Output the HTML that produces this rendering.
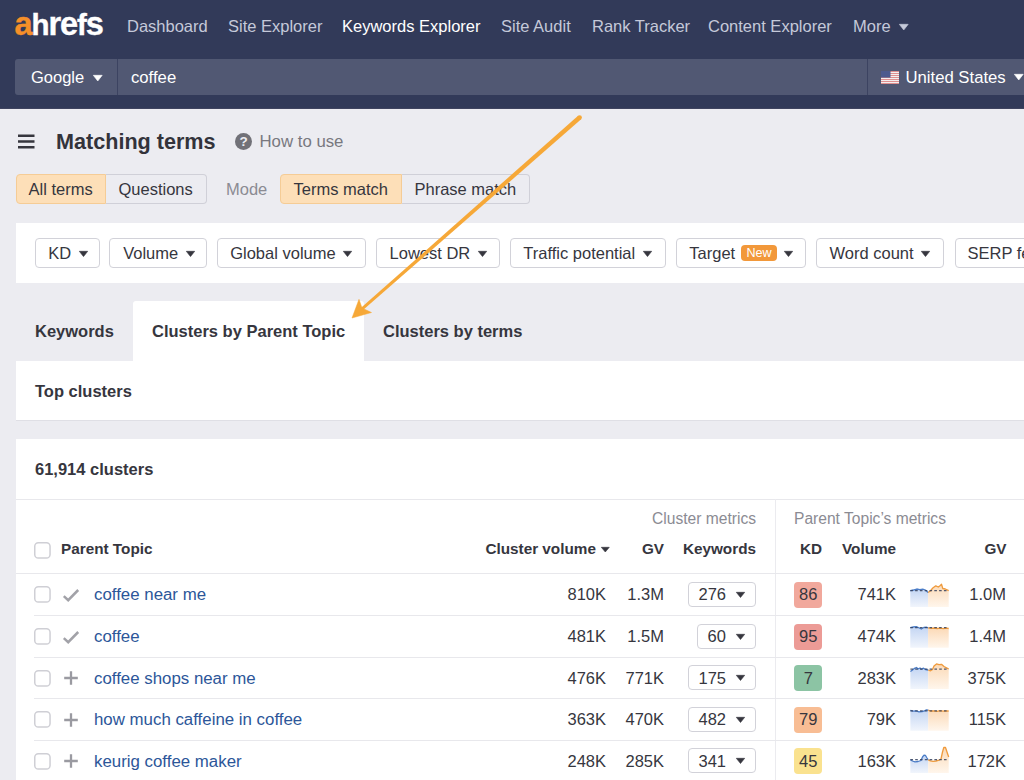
<!DOCTYPE html>
<html><head><meta charset="utf-8">
<style>
*{box-sizing:border-box;margin:0;padding:0}
html,body{width:1024px;height:780px;overflow:hidden;background:#ececf1;font-family:"Liberation Sans",Arial,sans-serif;color:#36363e}
.abs{position:absolute}
#hdr{position:absolute;left:0;top:0;width:1024px;height:108px;background:#323a59}
#hdr2{position:absolute;left:0;top:108px;width:1024px;height:1px;background:#3f4460}
#sb{position:absolute;left:15px;top:59px;width:1020px;height:36px;background:#515873;border-radius:3px}
.car{display:inline-block;position:relative;width:0;height:0;border-style:solid;border-color:transparent;border-top-color:currentColor;border-bottom-width:0;vertical-align:middle}
.t{position:absolute;white-space:nowrap}
.box{position:absolute;border:1px solid #d2d2d9;border-radius:4px;background:#fff}
.tg{position:absolute;top:174px;height:30px;border:1px solid #d0d0d8}
.tg.on{background:#fddfb8;border-color:#f5cc96}
.pan{position:absolute;left:15.5px;width:1010px;background:#fff}
.hl{position:absolute;height:1px;background:#e8e8ec}
.cb{position:absolute;width:16px;height:16px;border:1px solid #cacad1;border-radius:4px;background:#fff}
.kd{position:absolute;width:28px;height:26px;border-radius:4px}
</style></head><body>
<div id="hdr"></div><div id="hdr2"></div>
<div class="t" style="left:14.5px;top:6.1px;font-size:29.5px;line-height:36px;color:#fff;font-weight:bold;letter-spacing:-1.1px;-webkit-text-stroke:0.4px;"><span style="color:#f58f29;font-size:32.5px">a</span>h<span style="font-size:32.5px">re</span>f<span style="font-size:32.5px">s</span></div>
<div class="t" style="left:127px;top:16.0px;font-size:16.5px;line-height:20px;color:#c5c9d9;">Dashboard</div>
<div class="t" style="left:228px;top:16.0px;font-size:16.5px;line-height:20px;color:#c5c9d9;">Site Explorer</div>
<div class="t" style="left:342px;top:16.0px;font-size:16.5px;line-height:20px;color:#fff;">Keywords Explorer</div>
<div class="t" style="left:501px;top:16.0px;font-size:16.5px;line-height:20px;color:#c5c9d9;">Site Audit</div>
<div class="t" style="left:592px;top:16.0px;font-size:16.5px;line-height:20px;color:#c5c9d9;">Rank Tracker</div>
<div class="t" style="left:708px;top:16.0px;font-size:16.5px;line-height:20px;color:#c5c9d9;">Content Explorer</div>
<div class="t" style="left:853px;top:16.0px;font-size:16.5px;line-height:20px;color:#c5c9d9;">More<svg style="display:inline-block;position:relative;vertical-align:middle;margin-left:8px;top:-1px;overflow:visible" width="9.5" height="6" viewBox="0 0 9.5 6"><path d="M0.3 0.3 H9.2 L4.75 6 Z" fill="currentColor" stroke="currentColor" stroke-width="0.6" stroke-linejoin="round"/></svg></div>
<div id="sb"></div>
<div class="abs" style="left:117px;top:59px;width:1px;height:36px;background:#3c4361"></div>
<div class="abs" style="left:867px;top:59px;width:1px;height:36px;background:#3c4361"></div>
<div class="t" style="left:31px;top:67.0px;font-size:16.5px;line-height:20px;color:#fff;">Google<svg style="display:inline-block;position:relative;vertical-align:middle;margin-left:8.5px;top:-1px;overflow:visible" width="9.5" height="6" viewBox="0 0 9.5 6"><path d="M0.3 0.3 H9.2 L4.75 6 Z" fill="currentColor" stroke="currentColor" stroke-width="0.6" stroke-linejoin="round"/></svg></div>
<div class="t" style="left:131px;top:67.5px;font-size:16.7px;line-height:20px;color:#fff;">coffee</div>
<div class="t" style="left:905.5px;top:67.5px;font-size:16.7px;line-height:20px;color:#fff;">United States<svg style="display:inline-block;position:relative;vertical-align:middle;margin-left:8px;top:-1px;overflow:visible" width="9.5" height="6" viewBox="0 0 9.5 6"><path d="M0.3 0.3 H9.2 L4.75 6 Z" fill="currentColor" stroke="currentColor" stroke-width="0.6" stroke-linejoin="round"/></svg></div>
<svg class="abs" style="left:881px;top:71px" width="18" height="13" viewBox="0 0 18 13"><rect width="18" height="13" fill="#f4eeee"/><rect y="0" width="18" height="1" fill="#df8f8f"/><rect y="2" width="18" height="1" fill="#df8f8f"/><rect y="4" width="18" height="1" fill="#df8f8f"/><rect y="6" width="18" height="1" fill="#df8f8f"/><rect y="8" width="18" height="1" fill="#df8f8f"/><rect y="10" width="18" height="1" fill="#df8f8f"/><rect y="12" width="18" height="1" fill="#df8f8f"/><rect width="9.5" height="6.6" fill="#4c5a8e"/></svg>
<svg class="abs" style="left:18px;top:134px" width="17" height="16" viewBox="0 0 17 16"><path d="M0 1.8h16.5M0 7.5h16.5M0 13.2h16.5" stroke="#36363e" stroke-width="2.4" fill="none"/></svg>
<div class="t" style="left:56px;top:128.5px;font-size:21.6px;line-height:26px;color:#33333b;font-weight:bold;">Matching terms</div>
<div class="abs" style="left:235px;top:133px;width:17px;height:17px;border-radius:9px;background:#717178"></div>
<div class="t" style="left:239.4px;top:131.5px;font-size:13.5px;line-height:20px;color:#ededf2;font-weight:bold;">?</div>
<div class="t" style="left:259.5px;top:131.5px;font-size:16.8px;line-height:20px;color:#78787f;">How to use</div>
<div class="tg on" style="left:16px;width:90px;border-radius:4px 0 0 4px"></div>
<div class="tg" style="left:106px;width:101px;border-radius:0 4px 4px 0;border-left:none"></div>
<div class="tg on" style="left:280px;width:122px;border-radius:4px 0 0 4px"></div>
<div class="tg" style="left:402px;width:128px;border-radius:0 4px 4px 0;border-left:none"></div>
<div class="t" style="left:28.5px;top:179.0px;font-size:16.5px;line-height:20px;color:#36363e;">All terms</div>
<div class="t" style="left:118.5px;top:179.0px;font-size:16.5px;line-height:20px;color:#36363e;">Questions</div>
<div class="t" style="left:226px;top:179.0px;font-size:16.5px;line-height:20px;color:#8b8b93;">Mode</div>
<div class="t" style="left:293.5px;top:179.0px;font-size:16.5px;line-height:20px;color:#36363e;">Terms match</div>
<div class="t" style="left:414.5px;top:179.0px;font-size:16.5px;line-height:20px;color:#36363e;">Phrase match</div>
<div class="pan" style="top:223px;height:60px"></div>
<div class="box" style="left:35px;top:238px;width:65px;height:30px"></div>
<div class="t" style="left:48.3px;top:243.0px;font-size:16.5px;line-height:20px;color:#36363e;">KD<svg style="display:inline-block;position:relative;vertical-align:middle;margin-left:7.6px;top:-0.4px;overflow:visible" width="9" height="5.6" viewBox="0 0 9 5.6"><path d="M0.3 0.3 H8.7 L4.5 5.6 Z" fill="currentColor" stroke="currentColor" stroke-width="0.6" stroke-linejoin="round"/></svg></div>
<div class="box" style="left:109px;top:238px;width:98px;height:30px"></div>
<div class="t" style="left:123.2px;top:243.0px;font-size:16.5px;line-height:20px;color:#36363e;">Volume<svg style="display:inline-block;position:relative;vertical-align:middle;margin-left:7.6px;top:-0.4px;overflow:visible" width="9" height="5.6" viewBox="0 0 9 5.6"><path d="M0.3 0.3 H8.7 L4.5 5.6 Z" fill="currentColor" stroke="currentColor" stroke-width="0.6" stroke-linejoin="round"/></svg></div>
<div class="box" style="left:217px;top:238px;width:149px;height:30px"></div>
<div class="t" style="left:230.2px;top:243.0px;font-size:16.5px;line-height:20px;color:#36363e;">Global volume<svg style="display:inline-block;position:relative;vertical-align:middle;margin-left:7.6px;top:-0.4px;overflow:visible" width="9" height="5.6" viewBox="0 0 9 5.6"><path d="M0.3 0.3 H8.7 L4.5 5.6 Z" fill="currentColor" stroke="currentColor" stroke-width="0.6" stroke-linejoin="round"/></svg></div>
<div class="box" style="left:376px;top:238px;width:124px;height:30px"></div>
<div class="t" style="left:389.6px;top:243.0px;font-size:16.5px;line-height:20px;color:#36363e;">Lowest DR<svg style="display:inline-block;position:relative;vertical-align:middle;margin-left:7.6px;top:-0.4px;overflow:visible" width="9" height="5.6" viewBox="0 0 9 5.6"><path d="M0.3 0.3 H8.7 L4.5 5.6 Z" fill="currentColor" stroke="currentColor" stroke-width="0.6" stroke-linejoin="round"/></svg></div>
<div class="box" style="left:510px;top:238px;width:156px;height:30px"></div>
<div class="t" style="left:523.3px;top:243.0px;font-size:16.5px;line-height:20px;color:#36363e;">Traffic potential<svg style="display:inline-block;position:relative;vertical-align:middle;margin-left:7.6px;top:-0.4px;overflow:visible" width="9" height="5.6" viewBox="0 0 9 5.6"><path d="M0.3 0.3 H8.7 L4.5 5.6 Z" fill="currentColor" stroke="currentColor" stroke-width="0.6" stroke-linejoin="round"/></svg></div>
<div class="box" style="left:676px;top:238px;width:130px;height:30px"></div>
<div class="t" style="left:689.3px;top:243.0px;font-size:16.5px;line-height:20px;color:#36363e;">Target</div>
<div class="abs" style="left:741px;top:244.5px;width:36px;height:16.5px;border-radius:4px;background:#f2983a"></div>
<div class="t" style="left:746.5px;top:243.0px;font-size:12.6px;line-height:20px;color:#fff;">New</div>
<div class="t" style="left:784.4px;top:250.5px;line-height:0"><svg style="display:inline-block;position:relative;vertical-align:middle;margin-left:0px;top:0px;overflow:visible" width="9" height="5.6" viewBox="0 0 9 5.6"><path d="M0.3 0.3 H8.7 L4.5 5.6 Z" fill="currentColor" stroke="currentColor" stroke-width="0.6" stroke-linejoin="round"/></svg></div>
<div class="box" style="left:816px;top:238px;width:128px;height:30px"></div>
<div class="t" style="left:829.5px;top:243.0px;font-size:16.5px;line-height:20px;color:#36363e;">Word count<svg style="display:inline-block;position:relative;vertical-align:middle;margin-left:7.6px;top:-0.4px;overflow:visible" width="9" height="5.6" viewBox="0 0 9 5.6"><path d="M0.3 0.3 H8.7 L4.5 5.6 Z" fill="currentColor" stroke="currentColor" stroke-width="0.6" stroke-linejoin="round"/></svg></div>
<div class="box" style="left:955px;top:238px;width:120px;height:30px"></div>
<div class="t" style="left:967.5px;top:243.0px;font-size:16.5px;line-height:20px;color:#36363e;">SERP features</div>
<div class="abs" style="left:133px;top:301.2px;width:231.2px;height:60px;background:#fff;border-radius:3px 3px 0 0"></div>
<div class="t" style="left:35px;top:321.0px;font-size:16.5px;line-height:20px;color:#36363e;font-weight:bold;">Keywords</div>
<div class="t" style="left:152px;top:321.0px;font-size:16.5px;line-height:20px;color:#36363e;font-weight:bold;">Clusters by Parent Topic</div>
<div class="t" style="left:383px;top:321.0px;font-size:16.5px;line-height:20px;color:#36363e;font-weight:bold;">Clusters by terms</div>
<div class="pan" style="top:360.5px;height:60px;border-bottom:1px solid #dfdfe5"></div>
<div class="t" style="left:35px;top:381.0px;font-size:16.5px;line-height:20px;color:#36363e;font-weight:bold;">Top clusters</div>
<div class="pan" style="top:439px;height:360px"></div>
<div class="t" style="left:35px;top:459.0px;font-size:16.5px;line-height:20px;color:#36363e;font-weight:bold;">61,914 clusters</div>
<div class="hl" style="left:15.5px;top:499px;width:1010px"></div>
<div class="abs" style="left:775px;top:499px;width:1px;height:300px;background:#ebebef"></div>
<div class="t" style="right:268px;top:508.5px;font-size:15.6px;line-height:20px;color:#8b8b93;">Cluster metrics</div>
<div class="t" style="left:794px;top:508.5px;font-size:15.6px;line-height:20px;color:#8b8b93;">Parent Topic&rsquo;s metrics</div>
<svg class="abs" style="left:34.3px;top:541.7px" width="17" height="17" viewBox="0 0 17 17"><rect x="0.75" y="0.75" width="15.3" height="15.3" rx="3.6" fill="#fff" stroke="#cfcfd5" stroke-width="1.5"/></svg>
<div class="t" style="left:61px;top:538.5px;font-size:15.3px;line-height:20px;color:#36363e;font-weight:bold;">Parent Topic</div>
<div class="t" style="right:414.5px;top:538.5px;font-size:15.3px;line-height:20px;color:#36363e;font-weight:bold;">Cluster volume<svg style="display:inline-block;position:relative;vertical-align:middle;margin-left:5px;top:0px;overflow:visible" width="8.6" height="5" viewBox="0 0 8.6 5"><path d="M0.3 0.3 H8.299999999999999 L4.3 5 Z" fill="currentColor" stroke="currentColor" stroke-width="0.6" stroke-linejoin="round"/></svg></div>
<div class="t" style="right:360px;top:538.5px;font-size:15.3px;line-height:20px;color:#36363e;font-weight:bold;">GV</div>
<div class="t" style="right:268px;top:538.5px;font-size:15.3px;line-height:20px;color:#36363e;font-weight:bold;">Keywords</div>
<div class="t" style="left:800px;top:538.5px;font-size:15.3px;line-height:20px;color:#36363e;font-weight:bold;">KD</div>
<div class="t" style="left:842px;top:538.5px;font-size:15.3px;line-height:20px;color:#36363e;font-weight:bold;">Volume</div>
<div class="t" style="right:17.5px;top:538.5px;font-size:15.3px;line-height:20px;color:#36363e;font-weight:bold;">GV</div>
<div class="hl" style="left:15.5px;top:573px;width:1010px"></div>
<svg class="abs" style="left:34.3px;top:586px" width="17" height="17" viewBox="0 0 17 17"><rect x="0.75" y="0.75" width="15.3" height="15.3" rx="3.6" fill="#fff" stroke="#cfcfd5" stroke-width="1.5"/></svg>
<svg class="abs" style="left:62px;top:587px" width="18" height="16" viewBox="0 0 18 16"><path d="M1.8 9.2 L6.2 13.2 L16.2 3" stroke="#a2a2a8" stroke-width="2.5" fill="none"/></svg>
<div class="t" style="left:94px;top:584.5px;font-size:16.85px;line-height:20px;color:#2c5699;">coffee near me</div>
<div class="t" style="right:418px;top:584.0px;font-size:16.5px;line-height:20px;color:#36363e;">810K</div>
<div class="t" style="right:360px;top:584.0px;font-size:16.5px;line-height:20px;color:#36363e;">1.3M</div>
<div class="box" style="left:688px;top:582px;width:68px;height:25px"></div>
<div class="t" style="left:698.5px;top:584.0px;font-size:16.5px;line-height:20px;color:#36363e;">276</div>
<div class="t" style="left:736.2px;top:592.2px;line-height:0"><svg style="display:inline-block;position:relative;vertical-align:middle;margin-left:0px;top:0px;overflow:visible" width="9" height="5.5" viewBox="0 0 9 5.5"><path d="M0.3 0.3 H8.7 L4.5 5.5 Z" fill="currentColor" stroke="currentColor" stroke-width="0.6" stroke-linejoin="round"/></svg></div>
<div class="kd" style="left:794.3px;top:582px;background:#f1a89c"></div>
<div class="t" style="left:794.3px;top:584.0px;font-size:16.5px;line-height:20px;color:#36363e;width:28px;text-align:center;">86</div>
<div class="t" style="right:128px;top:584.0px;font-size:16.5px;line-height:20px;color:#36363e;">741K</div>
<div class="t" style="right:18px;top:584.0px;font-size:16.5px;line-height:20px;color:#36363e;">1.0M</div>
<div class="hl" style="left:34px;top:615px;width:991px"></div>
<svg class="abs" style="left:34.3px;top:628px" width="17" height="17" viewBox="0 0 17 17"><rect x="0.75" y="0.75" width="15.3" height="15.3" rx="3.6" fill="#fff" stroke="#cfcfd5" stroke-width="1.5"/></svg>
<svg class="abs" style="left:62px;top:628.5px" width="18" height="16" viewBox="0 0 18 16"><path d="M1.8 9.2 L6.2 13.2 L16.2 3" stroke="#a2a2a8" stroke-width="2.5" fill="none"/></svg>
<div class="t" style="left:94px;top:626.5px;font-size:16.85px;line-height:20px;color:#2c5699;">coffee</div>
<div class="t" style="right:418px;top:626.0px;font-size:16.5px;line-height:20px;color:#36363e;">481K</div>
<div class="t" style="right:360px;top:626.0px;font-size:16.5px;line-height:20px;color:#36363e;">1.5M</div>
<div class="box" style="left:697px;top:624px;width:59px;height:25px"></div>
<div class="t" style="left:707.5px;top:626.0px;font-size:16.5px;line-height:20px;color:#36363e;">60</div>
<div class="t" style="left:736.2px;top:633.7px;line-height:0"><svg style="display:inline-block;position:relative;vertical-align:middle;margin-left:0px;top:0px;overflow:visible" width="9" height="5.5" viewBox="0 0 9 5.5"><path d="M0.3 0.3 H8.7 L4.5 5.5 Z" fill="currentColor" stroke="currentColor" stroke-width="0.6" stroke-linejoin="round"/></svg></div>
<div class="kd" style="left:794.3px;top:623.5px;background:#ec9b96"></div>
<div class="t" style="left:794.3px;top:626.0px;font-size:16.5px;line-height:20px;color:#36363e;width:28px;text-align:center;">95</div>
<div class="t" style="right:128px;top:626.0px;font-size:16.5px;line-height:20px;color:#36363e;">474K</div>
<div class="t" style="right:18px;top:626.0px;font-size:16.5px;line-height:20px;color:#36363e;">1.4M</div>
<div class="hl" style="left:34px;top:657px;width:991px"></div>
<svg class="abs" style="left:34.3px;top:669.6px" width="17" height="17" viewBox="0 0 17 17"><rect x="0.75" y="0.75" width="15.3" height="15.3" rx="3.6" fill="#fff" stroke="#cfcfd5" stroke-width="1.5"/></svg>
<svg class="abs" style="left:63px;top:670px" width="16" height="16" viewBox="0 0 16 16"><path d="M8 1.2v13.6M1.2 8h13.6" stroke="#9a9aa1" stroke-width="2.3" fill="none"/></svg>
<div class="t" style="left:94px;top:668.5px;font-size:16.85px;line-height:20px;color:#2c5699;">coffee shops near me</div>
<div class="t" style="right:418px;top:668.0px;font-size:16.5px;line-height:20px;color:#36363e;">476K</div>
<div class="t" style="right:360px;top:668.0px;font-size:16.5px;line-height:20px;color:#36363e;">771K</div>
<div class="box" style="left:688px;top:665px;width:68px;height:25px"></div>
<div class="t" style="left:698.5px;top:668.0px;font-size:16.5px;line-height:20px;color:#36363e;">175</div>
<div class="t" style="left:736.2px;top:675.2px;line-height:0"><svg style="display:inline-block;position:relative;vertical-align:middle;margin-left:0px;top:0px;overflow:visible" width="9" height="5.5" viewBox="0 0 9 5.5"><path d="M0.3 0.3 H8.7 L4.5 5.5 Z" fill="currentColor" stroke="currentColor" stroke-width="0.6" stroke-linejoin="round"/></svg></div>
<div class="kd" style="left:794.3px;top:665px;background:#8cc4a4"></div>
<div class="t" style="left:794.3px;top:668.0px;font-size:16.5px;line-height:20px;color:#36363e;width:28px;text-align:center;">7</div>
<div class="t" style="right:128px;top:668.0px;font-size:16.5px;line-height:20px;color:#36363e;">283K</div>
<div class="t" style="right:18px;top:668.0px;font-size:16.5px;line-height:20px;color:#36363e;">375K</div>
<div class="hl" style="left:34px;top:698px;width:991px"></div>
<svg class="abs" style="left:34.3px;top:711px" width="17" height="17" viewBox="0 0 17 17"><rect x="0.75" y="0.75" width="15.3" height="15.3" rx="3.6" fill="#fff" stroke="#cfcfd5" stroke-width="1.5"/></svg>
<svg class="abs" style="left:63px;top:711.5px" width="16" height="16" viewBox="0 0 16 16"><path d="M8 1.2v13.6M1.2 8h13.6" stroke="#9a9aa1" stroke-width="2.3" fill="none"/></svg>
<div class="t" style="left:94px;top:709.5px;font-size:16.85px;line-height:20px;color:#2c5699;">how much caffeine in coffee</div>
<div class="t" style="right:418px;top:709.0px;font-size:16.5px;line-height:20px;color:#36363e;">363K</div>
<div class="t" style="right:360px;top:709.0px;font-size:16.5px;line-height:20px;color:#36363e;">470K</div>
<div class="box" style="left:688px;top:707px;width:68px;height:25px"></div>
<div class="t" style="left:698.5px;top:709.0px;font-size:16.5px;line-height:20px;color:#36363e;">482</div>
<div class="t" style="left:736.2px;top:716.7px;line-height:0"><svg style="display:inline-block;position:relative;vertical-align:middle;margin-left:0px;top:0px;overflow:visible" width="9" height="5.5" viewBox="0 0 9 5.5"><path d="M0.3 0.3 H8.7 L4.5 5.5 Z" fill="currentColor" stroke="currentColor" stroke-width="0.6" stroke-linejoin="round"/></svg></div>
<div class="kd" style="left:794.3px;top:706.5px;background:#f8bd94"></div>
<div class="t" style="left:794.3px;top:709.0px;font-size:16.5px;line-height:20px;color:#36363e;width:28px;text-align:center;">79</div>
<div class="t" style="right:128px;top:709.0px;font-size:16.5px;line-height:20px;color:#36363e;">79K</div>
<div class="t" style="right:18px;top:709.0px;font-size:16.5px;line-height:20px;color:#36363e;">115K</div>
<div class="hl" style="left:34px;top:740px;width:991px"></div>
<svg class="abs" style="left:34.3px;top:752.6px" width="17" height="17" viewBox="0 0 17 17"><rect x="0.75" y="0.75" width="15.3" height="15.3" rx="3.6" fill="#fff" stroke="#cfcfd5" stroke-width="1.5"/></svg>
<svg class="abs" style="left:63px;top:753px" width="16" height="16" viewBox="0 0 16 16"><path d="M8 1.2v13.6M1.2 8h13.6" stroke="#9a9aa1" stroke-width="2.3" fill="none"/></svg>
<div class="t" style="left:94px;top:751.5px;font-size:16.85px;line-height:20px;color:#2c5699;">keurig coffee maker</div>
<div class="t" style="right:418px;top:751.0px;font-size:16.5px;line-height:20px;color:#36363e;">248K</div>
<div class="t" style="right:360px;top:751.0px;font-size:16.5px;line-height:20px;color:#36363e;">285K</div>
<div class="box" style="left:688px;top:748px;width:68px;height:25px"></div>
<div class="t" style="left:698.5px;top:751.0px;font-size:16.5px;line-height:20px;color:#36363e;">341</div>
<div class="t" style="left:736.2px;top:758.2px;line-height:0"><svg style="display:inline-block;position:relative;vertical-align:middle;margin-left:0px;top:0px;overflow:visible" width="9" height="5.5" viewBox="0 0 9 5.5"><path d="M0.3 0.3 H8.7 L4.5 5.5 Z" fill="currentColor" stroke="currentColor" stroke-width="0.6" stroke-linejoin="round"/></svg></div>
<div class="kd" style="left:794.3px;top:748px;background:#fae28f"></div>
<div class="t" style="left:794.3px;top:751.0px;font-size:16.5px;line-height:20px;color:#36363e;width:28px;text-align:center;">45</div>
<div class="t" style="right:128px;top:751.0px;font-size:16.5px;line-height:20px;color:#36363e;">163K</div>
<div class="t" style="right:18px;top:751.0px;font-size:16.5px;line-height:20px;color:#36363e;">172K</div>
<svg class="abs" style="left:0;top:0" width="1024" height="780" viewBox="0 0 1024 780">
<defs><linearGradient id="gb" x1="0" y1="0" x2="0" y2="1"><stop offset="0" stop-color="#c3d5f3"/><stop offset="1" stop-color="#f1f5fc"/></linearGradient><linearGradient id="go" x1="0" y1="0" x2="0" y2="1"><stop offset="0" stop-color="#fbd9b6"/><stop offset="1" stop-color="#fff6ec"/></linearGradient></defs>
<path d="M910.3 590.6 L913.3 590 L916.8 589 L919.8 589.6 L922.8 589.2 L925.3 590 L928.1 592.5 L928.1 607.1 L910.3 607.1Z" fill="url(#gb)"/>
<path d="M928.1 592.5 L930.3 591 L932.8 588 L935.8 585.8 L938.3 587 L940.3 585.5 L941.5 584.3 L942.8 588.5 L945.3 589 L948.7 590.6 L948.7 607.1 L928.1 607.1Z" fill="url(#go)"/>
<path d="M910.3 590.6 L913.3 590 L916.8 589 L919.8 589.6 L922.8 589.2 L925.3 590 L928.1 592.5" stroke="#4a7cc7" stroke-width="1.3" fill="none" stroke-linejoin="round"/>
<path d="M928.1 592.5 L930.3 591 L932.8 588 L935.8 585.8 L938.3 587 L940.3 585.5 L941.5 584.3 L942.8 588.5 L945.3 589 L948.7 590.6" stroke="#ef9a3c" stroke-width="1.3" fill="none" stroke-linejoin="round"/>
<path d="M910.3 590.6 L948.7 590.6" stroke="#34405c" stroke-width="1.2" stroke-dasharray="2.6 2.2" fill="none" opacity="0.85"/>
<path d="M910.3 627.6 L913.3 627 L916.3 626.6 L919.3 628 L921.3 629 L923.8 627.5 L926.3 627.2 L928.1 627.8 L928.1 647.8 L910.3 647.8Z" fill="url(#gb)"/>
<path d="M928.1 627.8 L931.3 628.3 L934.3 628 L937.3 628.5 L940.3 628.2 L943.3 628.6 L946.3 628.2 L948.7 628.5 L948.7 647.8 L928.1 647.8Z" fill="url(#go)"/>
<path d="M910.3 627.6 L913.3 627 L916.3 626.6 L919.3 628 L921.3 629 L923.8 627.5 L926.3 627.2 L928.1 627.8" stroke="#4a7cc7" stroke-width="1.3" fill="none" stroke-linejoin="round"/>
<path d="M928.1 627.8 L931.3 628.3 L934.3 628 L937.3 628.5 L940.3 628.2 L943.3 628.6 L946.3 628.2 L948.7 628.5" stroke="#ef9a3c" stroke-width="1.3" fill="none" stroke-linejoin="round"/>
<path d="M910.3 627.6 L948.7 627.6" stroke="#34405c" stroke-width="1.2" stroke-dasharray="2.6 2.2" fill="none" opacity="0.85"/>
<path d="M910.4 671.5 L912.5 670 L914.5 668.3 L916.5 667.5 L918 669 L920 668 L921.5 669.2 L923.5 668.2 L925.5 669.5 L928.2 670 L928.2 689 L910.4 689Z" fill="url(#gb)"/>
<path d="M928.2 670 L930.5 670.8 L932.5 669.5 L934 666 L936.5 663.9 L939 664.6 L941.5 664.3 L944 666.5 L946.5 667.8 L948.7 669 L948.7 689 L928.2 689Z" fill="url(#go)"/>
<path d="M910.4 671.5 L912.5 670 L914.5 668.3 L916.5 667.5 L918 669 L920 668 L921.5 669.2 L923.5 668.2 L925.5 669.5 L928.2 670" stroke="#4a7cc7" stroke-width="1.3" fill="none" stroke-linejoin="round"/>
<path d="M928.2 670 L930.5 670.8 L932.5 669.5 L934 666 L936.5 663.9 L939 664.6 L941.5 664.3 L944 666.5 L946.5 667.8 L948.7 669" stroke="#ef9a3c" stroke-width="1.3" fill="none" stroke-linejoin="round"/>
<path d="M910.4 669.1 L948.7 669.1" stroke="#34405c" stroke-width="1.2" stroke-dasharray="2.6 2.2" fill="none" opacity="0.85"/>
<path d="M910.4 710.3 L913 711.2 L916 710.8 L919 711.8 L922 711.5 L924.5 710.8 L926.5 709.8 L928.2 710.2 L928.2 730.7 L910.4 730.7Z" fill="url(#gb)"/>
<path d="M928.2 710.2 L931 711 L934 710.8 L937 711.3 L940 710.6 L943 711.2 L946 710.8 L948.7 711 L948.7 730.7 L928.2 730.7Z" fill="url(#go)"/>
<path d="M910.4 710.3 L913 711.2 L916 710.8 L919 711.8 L922 711.5 L924.5 710.8 L926.5 709.8 L928.2 710.2" stroke="#4a7cc7" stroke-width="1.3" fill="none" stroke-linejoin="round"/>
<path d="M928.2 710.2 L931 711 L934 710.8 L937 711.3 L940 710.6 L943 711.2 L946 710.8 L948.7 711" stroke="#ef9a3c" stroke-width="1.3" fill="none" stroke-linejoin="round"/>
<path d="M910.4 710.8 L948.7 710.8" stroke="#34405c" stroke-width="1.2" stroke-dasharray="2.6 2.2" fill="none" opacity="0.85"/>
<path d="M910.4 759.6 L912.5 761 L915 761.8 L918 761.5 L921 760.5 L922.5 757 L924 755.2 L925.5 755.5 L927 758 L928.2 759.8 L928.2 772.9 L910.4 772.9Z" fill="url(#gb)"/>
<path d="M928.2 759.8 L930.5 760.8 L933 761.3 L936 761 L939 760.2 L941 759 L942.5 752 L943.8 747.5 L945.5 747.5 L947 752 L948.7 757 L948.7 772.9 L928.2 772.9Z" fill="url(#go)"/>
<path d="M910.4 759.6 L912.5 761 L915 761.8 L918 761.5 L921 760.5 L922.5 757 L924 755.2 L925.5 755.5 L927 758 L928.2 759.8" stroke="#4a7cc7" stroke-width="1.3" fill="none" stroke-linejoin="round"/>
<path d="M928.2 759.8 L930.5 760.8 L933 761.3 L936 761 L939 760.2 L941 759 L942.5 752 L943.8 747.5 L945.5 747.5 L947 752 L948.7 757" stroke="#ef9a3c" stroke-width="1.3" fill="none" stroke-linejoin="round"/>
<path d="M910.4 759.6 L948.7 759.6" stroke="#34405c" stroke-width="1.2" stroke-dasharray="2.6 2.2" fill="none" opacity="0.85"/>
<path d="M578.08 115.87 L360.21 308.57 L362.19 310.83 L581.12 119.33Z" fill="#f6a838"/>
<circle cx="579.6" cy="117.6" r="2.3" fill="#f6a838"/>
<path d="M352 318 L359 299.3 L362 308 L371.5 312.5 Z" fill="#f6a838" stroke="#f6a838" stroke-width="0.5" stroke-linejoin="round"/>
</svg>
</body></html>
